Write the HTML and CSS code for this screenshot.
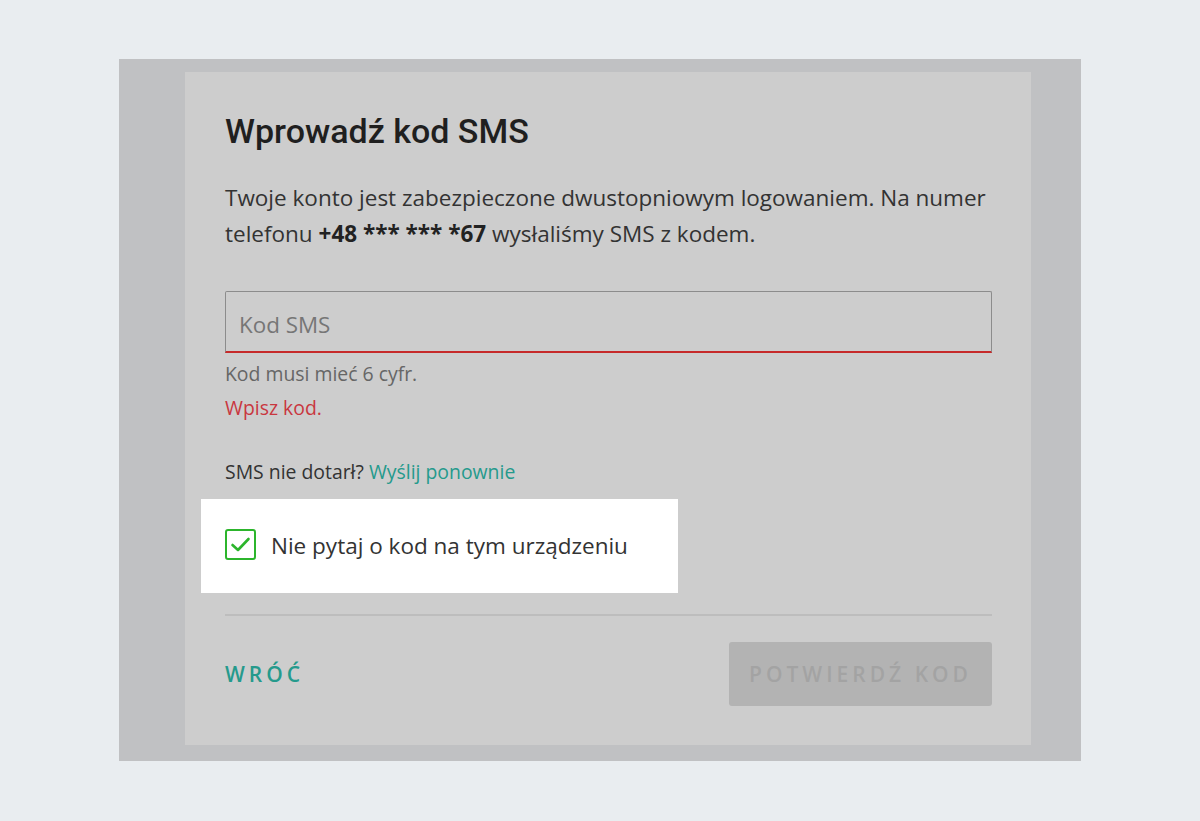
FILE: index.html
```html
<!DOCTYPE html>
<html lang="pl">
<head>
<meta charset="utf-8">
<title>Wprowadź kod SMS</title>
<link rel="stylesheet" href="styles.css">
</head>
<body>
<div class="overlay">
  <div class="card">
    <h1 class="title">Wprowadź kod SMS</h1>
    <p class="lead">Twoje konto jest zabezpieczone dwustopniowym logowaniem. Na numer<br><span>telefonu </span><b>+48 *** *** *67</b><span> wysłaliśmy SMS z kodem.</span></p>
    <div class="field">
      <span class="placeholder">Kod SMS</span>
    </div>
    <p class="hint">Kod musi mieć 6 cyfr.</p>
    <p class="error">Wpisz kod.</p>
    <p class="resend">SMS nie dotarł? <span class="link">Wyślij ponownie</span></p>
    <div class="highlight">
      <span class="checkbox">
        <svg width="21" height="17" viewBox="0 0 21 17"><path d="M2.5 9 L8 14 L18.5 3" fill="none" stroke="#2cb52c" stroke-width="2.6" stroke-linecap="round" stroke-linejoin="round"/></svg>
      </span>
      <span class="check-label">Nie pytaj o kod na tym urządzeniu</span>
    </div>
    <div class="divider"></div>
    <div class="footer">
      <span class="back">WRÓĆ</span>
      <span class="confirm">POTWIERDŹ KOD</span>
    </div>
  </div>
</div>
</body>
</html>
```
FILE: styles.css
```css
html, body {
  margin: 0;
  padding: 0;
}
body {
  background: #e9edf0;
  height: 821px;
  display: flex;
  align-items: center;
  justify-content: center;
  font-family: "Open Sans", "Liberation Sans", sans-serif;
}
.overlay {
  background: #c0c1c3;
  width: 962px;
  height: 702px;
  box-sizing: border-box;
  padding: 13px 50px 16px 66px;
  margin-top: -1px;
}
.card {
  background: #cdcdcd;
  height: 673px;
  box-sizing: border-box;
  padding: 41px 39px 0 40px;
}
.title {
  margin: 0;
  font-family: Roboto, "Liberation Sans", sans-serif;
  font-weight: 500;
  font-size: 34px;
  line-height: 36px;
  color: #1f1f1f;
}
.lead {
  margin: 31px 0 0;
  font-size: 22.5px;
  line-height: 36px;
  color: #333;
}
.lead b {
  font-weight: 700;
  color: #222;
}
.field {
  margin-top: 39px;
  height: 62px;
  box-sizing: border-box;
  border: 1px solid #8c8c8c;
  border-bottom: 2px solid #c62a2a;
  border-radius: 2px 2px 0 0;
  display: flex;
  align-items: center;
  padding: 5px 0 0 13px;
}
.placeholder {
  font-size: 22.4px;
  color: #767676;
}
.hint, .error, .resend {
  margin: 0;
  font-size: 19.4px;
  line-height: 24px;
}
.hint {
  margin-top: 9px;
  color: #666;
}
.error {
  margin-top: 10px;
  color: #c9373f;
}
.resend {
  margin-top: 40px;
  color: #333;
}
.link {
  color: #259a8c;
}
.highlight {
  margin: 15px 0 0 -24px;
  width: 477px;
  height: 94px;
  background: #fff;
  box-sizing: border-box;
  padding-left: 24px;
  display: flex;
  align-items: center;
}
.checkbox {
  width: 31px;
  height: 31px;
  box-sizing: border-box;
  border: 2.5px solid #2cb52c;
  border-radius: 3px;
  display: flex;
  align-items: center;
  justify-content: center;
  margin-top: -3px;
}
.check-label {
  margin-left: 15px;
  font-size: 22.5px;
  line-height: 36px;
  color: #333;
}
.divider {
  margin-top: 21px;
  height: 2px;
  background: #bdbdbd;
}
.footer {
  margin-top: 26px;
  display: flex;
  justify-content: space-between;
  align-items: center;
}
.back {
  font-size: 21px;
  font-weight: 600;
  letter-spacing: 4px;
  color: #259a8c;
}
.confirm {
  width: 263px;
  height: 64px;
  box-sizing: border-box;
  background: #b3b3b3;
  border-radius: 3px;
  display: flex;
  align-items: center;
  justify-content: center;
  font-size: 21px;
  font-weight: 600;
  letter-spacing: 4px;
  color: #a3a3a3;
}
```
